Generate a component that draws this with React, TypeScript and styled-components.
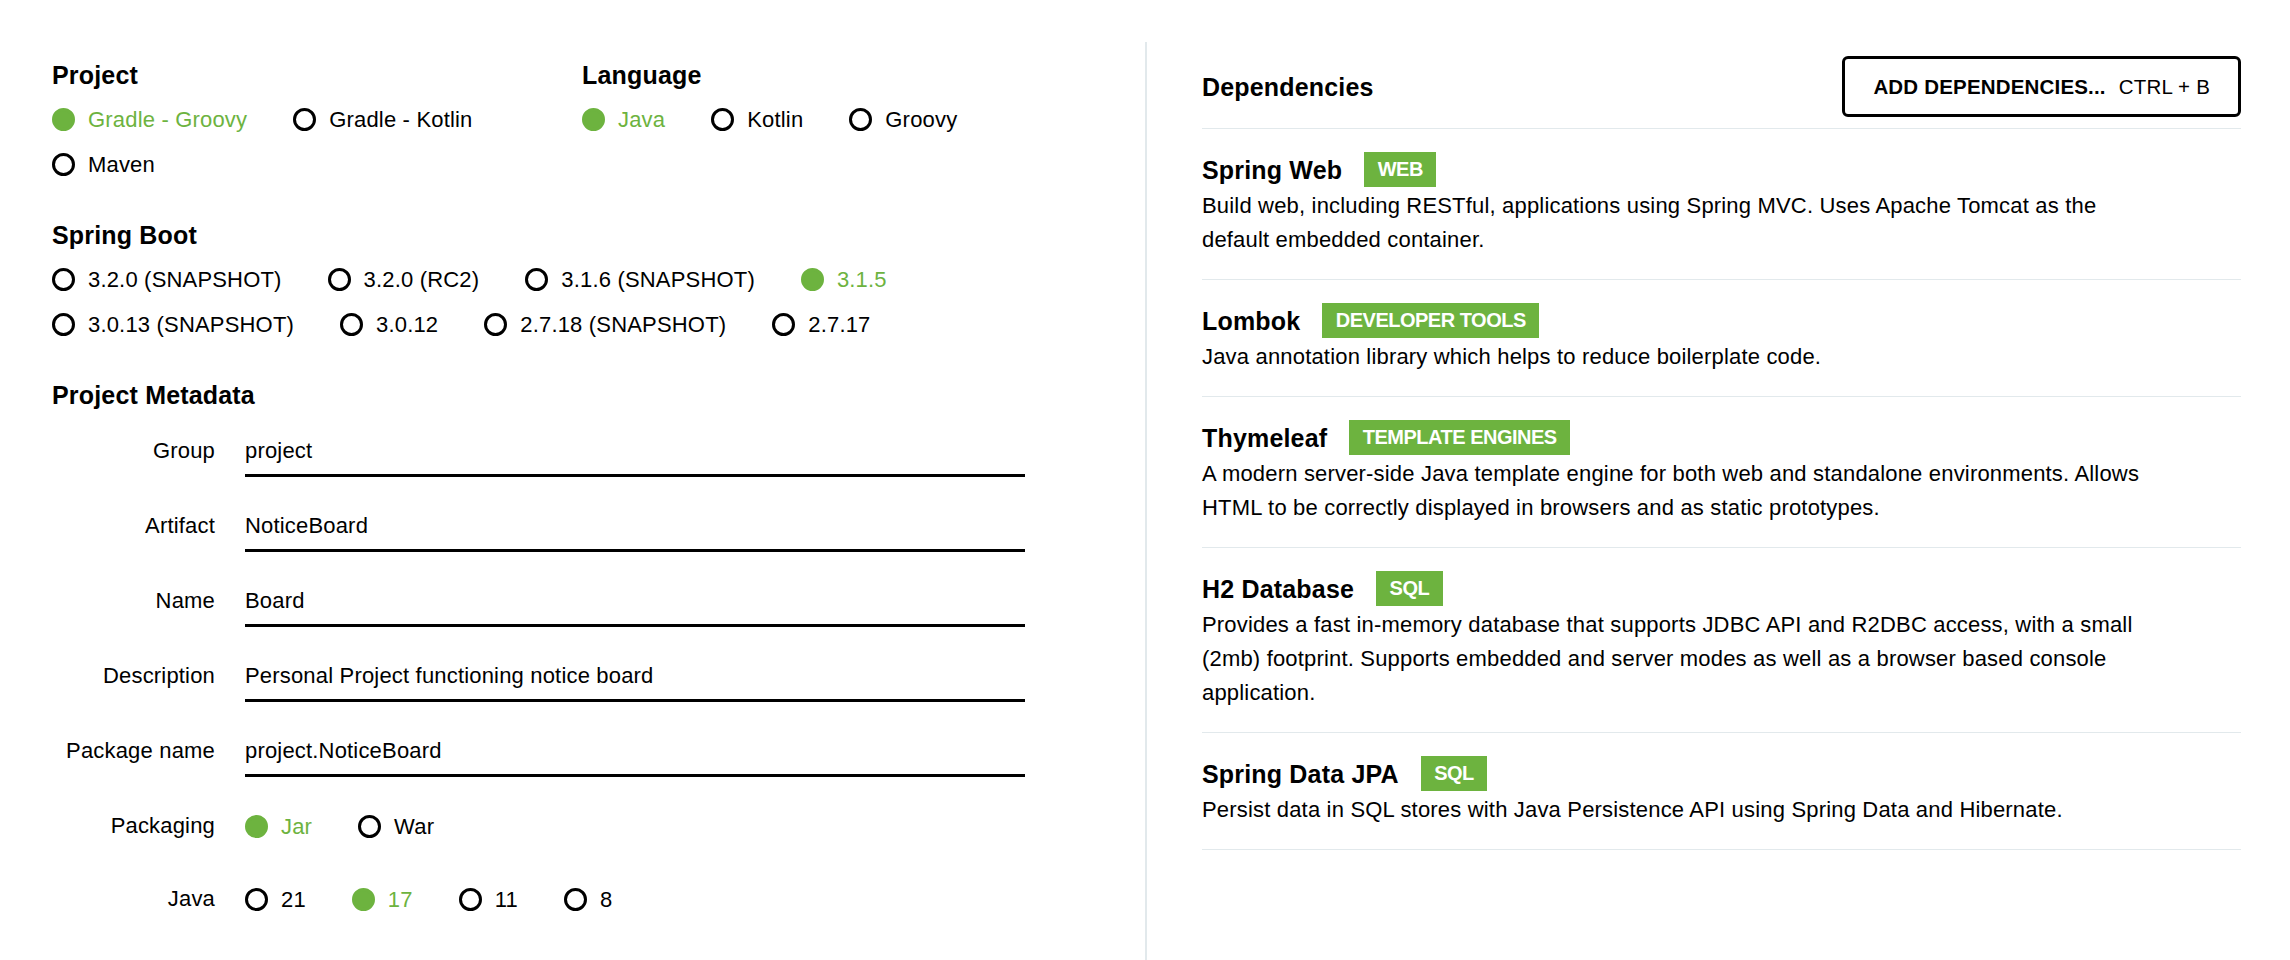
import styled, { createGlobalStyle } from "styled-components";

const GREEN = "#6db33f";
const LINE = "#e2e9ec";

interface IOption {
  label: string
  checked?: boolean
}

interface IDependency {
  name: string
  group: string
  description: string
}

const GlobalStyle = createGlobalStyle`
  html, body {
    margin: 0;
    padding: 0;
    background: #fff;
  }

  body {
    font-family: "Liberation Sans", Arial, Helvetica, sans-serif;
    letter-spacing: 0.18px;
    color: #000;
  }

  * {
    box-sizing: border-box;
  }
`;

const Page = styled.div`
  display: grid;
  grid-template-columns: 1145px 1fr;
  min-height: 960px;
`;

const LeftPanel = styled.main`
  padding: 60px 0 0 52px;
`;

const RightPanel = styled.aside`
  margin-top: 42px;
  border-left: 2px solid ${LINE};
  padding: 0 49px 0 55px;
`;

const Section = styled.section`
  margin-bottom: 33px;
`;

const TopGrid = styled.div`
  display: grid;
  grid-template-columns: 530px 1fr;
  margin-bottom: 33px;
`;

const SectionTitle = styled.h2<{ $gap?: number }>`
  margin: 0 0 ${({ $gap }) => $gap ?? 7}px;
  font-size: 25px;
  line-height: 30px;
  font-weight: 700;
`;

const RadioRow = styled.div<{ $height?: number }>`
  display: flex;
  align-items: center;
  height: ${({ $height }) => $height ?? 45}px;
`;

const RadioItem = styled.label<{ $checked?: boolean }>`
  display: flex;
  align-items: center;
  margin-right: 46px;
  font-size: 22px;
  line-height: 45px;
  white-space: nowrap;
  color: ${({ $checked }) => ($checked ? GREEN : "#000")};
`;

const Dot = styled.span<{ $checked?: boolean }>`
  flex: none;
  width: 23px;
  height: 23px;
  margin-right: 13px;
  border-radius: 50%;
  border: 3px solid ${({ $checked }) => ($checked ? GREEN : "#000")};
  background: ${({ $checked }) => ($checked ? GREEN : "transparent")};
`;

const FieldRow = styled.div`
  display: flex;
  align-items: flex-start;
  margin-bottom: 25px;
`;

const FieldLabel = styled.label`
  width: 163px;
  margin-right: 30px;
  text-align: right;
  font-size: 22px;
  line-height: 47px;
`;

const TextInput = styled.input`
  width: 780px;
  height: 50px;
  padding: 0;
  border: none;
  border-bottom: 3px solid #000;
  outline: none;
  background: transparent;
  font-family: inherit;
  font-size: 22px;
  letter-spacing: 0.18px;
  line-height: 47px;
  color: #000;
`;

const DepsHeader = styled.div`
  display: flex;
  justify-content: space-between;
  align-items: center;
  padding: 14px 0 11px;
  border-bottom: 1px solid ${LINE};
`;

const AddButton = styled.button`
  display: flex;
  align-items: center;
  height: 61px;
  padding: 0 28px;
  border: 3px solid #000;
  border-radius: 6px;
  background: #fff;
  font-family: inherit;
  font-size: 20.5px;
  font-weight: 700;
  letter-spacing: 0.18px;
  color: #000;
  cursor: pointer;
`;

const Shortcut = styled.span`
  margin-left: 13px;
  font-weight: 400;
`;

const DepItem = styled.div`
  padding: 23px 0 22px;
  border-bottom: 1px solid ${LINE};
`;

const DepHead = styled.div`
  display: flex;
  align-items: center;
  height: 35px;
  margin-bottom: 2px;
`;

const DepName = styled.span`
  font-size: 25px;
  line-height: 30px;
  font-weight: 700;
`;

const Badge = styled.span`
  display: inline-flex;
  align-items: center;
  height: 35px;
  margin-left: 22px;
  padding: 0 13.5px;
  background: ${GREEN};
  color: #fff;
  font-size: 20px;
  font-weight: 700;
  letter-spacing: -0.5px;
  text-transform: uppercase;
`;

const DepDesc = styled.p`
  max-width: 952px;
  margin: 0;
  font-size: 22px;
  line-height: 34px;
`;

const projectOptions: IOption[][] = [
  [{ label: "Gradle - Groovy", checked: true }, { label: "Gradle - Kotlin" }],
  [{ label: "Maven" }],
];

const languageOptions: IOption[][] = [
  [{ label: "Java", checked: true }, { label: "Kotlin" }, { label: "Groovy" }],
];

const bootOptions: IOption[][] = [
  [
    { label: "3.2.0 (SNAPSHOT)" },
    { label: "3.2.0 (RC2)" },
    { label: "3.1.6 (SNAPSHOT)" },
    { label: "3.1.5", checked: true },
  ],
  [
    { label: "3.0.13 (SNAPSHOT)" },
    { label: "3.0.12" },
    { label: "2.7.18 (SNAPSHOT)" },
    { label: "2.7.17" },
  ],
];

const metadata = [
  { label: "Group", value: "project" },
  { label: "Artifact", value: "NoticeBoard" },
  { label: "Name", value: "Board" },
  { label: "Description", value: "Personal Project functioning notice board" },
  { label: "Package name", value: "project.NoticeBoard" },
];

const packaging: IOption[] = [{ label: "Jar", checked: true }, { label: "War" }];
const javaVersions: IOption[] = [
  { label: "21" },
  { label: "17", checked: true },
  { label: "11" },
  { label: "8" },
];

const dependencies: IDependency[] = [
  {
    name: "Spring Web",
    group: "Web",
    description:
      "Build web, including RESTful, applications using Spring MVC. Uses Apache Tomcat as the default embedded container.",
  },
  {
    name: "Lombok",
    group: "Developer Tools",
    description: "Java annotation library which helps to reduce boilerplate code.",
  },
  {
    name: "Thymeleaf",
    group: "Template Engines",
    description:
      "A modern server-side Java template engine for both web and standalone environments. Allows HTML to be correctly displayed in browsers and as static prototypes.",
  },
  {
    name: "H2 Database",
    group: "SQL",
    description:
      "Provides a fast in-memory database that supports JDBC API and R2DBC access, with a small (2mb) footprint. Supports embedded and server modes as well as a browser based console application.",
  },
  {
    name: "Spring Data JPA",
    group: "SQL",
    description:
      "Persist data in SQL stores with Java Persistence API using Spring Data and Hibernate.",
  },
];

const Radio: React.FC<IOption> = ({ label, checked }) => (
  <RadioItem $checked={checked}>
    <Dot $checked={checked} />
    {label}
  </RadioItem>
);

const RadioGroup: React.FC<{ rows: IOption[][] }> = ({ rows }) => (
  <>
    {rows.map((row, i) => (
      <RadioRow key={i}>
        {row.map((opt) => (
          <Radio key={opt.label} {...opt} />
        ))}
      </RadioRow>
    ))}
  </>
);

const App: React.FC = () => {
  return (
    <>
      <GlobalStyle />
      <Page>
        <LeftPanel>
          <TopGrid>
            <div>
              <SectionTitle>Project</SectionTitle>
              <RadioGroup rows={projectOptions} />
            </div>
            <div>
              <SectionTitle>Language</SectionTitle>
              <RadioGroup rows={languageOptions} />
            </div>
          </TopGrid>

          <Section>
            <SectionTitle>Spring Boot</SectionTitle>
            <RadioGroup rows={bootOptions} />
          </Section>

          <Section>
            <SectionTitle $gap={17}>Project Metadata</SectionTitle>
            {metadata.map((field) => (
              <FieldRow key={field.label}>
                <FieldLabel>{field.label}</FieldLabel>
                <TextInput defaultValue={field.value} readOnly />
              </FieldRow>
            ))}
            <FieldRow>
              <FieldLabel>Packaging</FieldLabel>
              <RadioRow $height={48}>
                {packaging.map((opt) => (
                  <Radio key={opt.label} {...opt} />
                ))}
              </RadioRow>
            </FieldRow>
            <FieldRow>
              <FieldLabel>Java</FieldLabel>
              <RadioRow $height={48}>
                {javaVersions.map((opt) => (
                  <Radio key={opt.label} {...opt} />
                ))}
              </RadioRow>
            </FieldRow>
          </Section>
        </LeftPanel>

        <RightPanel>
          <DepsHeader>
            <SectionTitle $gap={0}>Dependencies</SectionTitle>
            <AddButton>
              ADD DEPENDENCIES...
              <Shortcut>CTRL + B</Shortcut>
            </AddButton>
          </DepsHeader>

          {dependencies.map((dep) => (
            <DepItem key={dep.name}>
              <DepHead>
                <DepName>{dep.name}</DepName>
                <Badge>{dep.group}</Badge>
              </DepHead>
              <DepDesc>{dep.description}</DepDesc>
            </DepItem>
          ))}
        </RightPanel>
      </Page>
    </>
  );
};

export default App;
